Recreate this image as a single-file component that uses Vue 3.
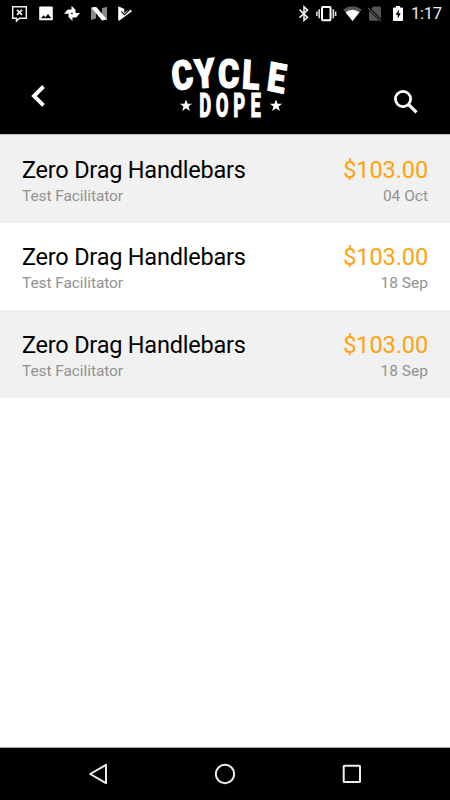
<script setup>
import { ref } from 'vue'

const time = ref('1:17')

const orders = ref([
  { id: 1, title: 'Zero Drag Handlebars', seller: 'Test Facilitator', price: '$103.00', date: '04 Oct' },
  { id: 2, title: 'Zero Drag Handlebars', seller: 'Test Facilitator', price: '$103.00', date: '18 Sep' },
  { id: 3, title: 'Zero Drag Handlebars', seller: 'Test Facilitator', price: '$103.00', date: '18 Sep' }
])
</script>

<template>
  <div class="screen">
    <div class="status-bar">
      <div class="status-left">
        <svg width="18" height="18" viewBox="0 0 18 18">
          <path d="M1.700 1.700h13.600v11.500H8.500L5.500 16v-2.800H1.700z" fill="none" stroke="#eee" stroke-width="1.500" />
          <path d="M6 4.900l5 5M11 4.900l-5 5" stroke="#eee" stroke-width="1.800" />
        </svg>
        <svg width="18" height="18" viewBox="0 0 18 18">
          <path d="M2.200 1.500h11.600q1 0 1 1v11.800q0 1-1 1H2.200q-1 0-1-1V2.500q0-1 1-1zM2.900 13.300h10.400l-3.300-4.300-2.600 3.200-1.700-2z" fill="#fff" fill-rule="evenodd" />
        </svg>
        <svg width="18" height="18" viewBox="0 0 18 18">
          <g fill="#fff">
            <path d="M7.500 8V.7L11.500 4.700V8z" />
            <path d="M8 8h8l-3.700 4.500H8z" />
            <path d="M8.500 8.500V16L4.500 12V8.500z" />
            <path d="M8.500 8.700H0l3.700-4.200h4.800z" />
          </g>
          <circle cx="8" cy="8.400" r=".8" fill="#000" />
        </svg>
        <svg width="18" height="18" viewBox="0 0 18 18">
          <path d="M0 3l5-1v11.500l-5 1.500zM11 3l5-1v12l-5 1.500z" fill="#888" />
          <path d="M.2 2.500l5-.5L16 14.500l-5 1z" fill="#fff" />
        </svg>
        <svg width="18" height="18" viewBox="0 0 18 18">
          <path d="M1.200 1.300L7.400 4l-.4 3.800L13 4l2 2.300L2.500 15.600q-1.300.5-1.300-.8z" fill="#fff" />
          <path d="M4.300 6.300l3 3.300L13.500 4" fill="none" stroke="#000" stroke-width="1.100" />
        </svg>
      </div>
      <div class="status-right">
        <svg class="bluetooth" width="12" height="18" viewBox="0 0 12 18">
          <path d="M1.500 4.700l8 7.600L6 15.500V1.900l3.500 3.200-8 7.600" fill="none" stroke="#eee" stroke-width="1.600" />
        </svg>
        <svg class="vibrate" width="22" height="18" viewBox="0 0 22 18">
          <rect x="6" y="2" width="8.500" height="13.200" rx=".8" fill="none" stroke="#fff" stroke-width="2" />
          <path d="M3.200 4.200v9M17.300 4.200v9M.9 6.500v4.500M19.600 6.500v4.500" stroke="#ddd" stroke-width="1.600" />
        </svg>
        <svg class="wifi" width="20" height="18" viewBox="0 0 20 18">
          <path d="M.2 4.500Q9.500-2 18.800 4.500L9.500 16z" fill="#555" />
          <path d="M2.500 7.300Q9.500 2.300 16.500 7.300L9.500 16z" fill="#fff" />
        </svg>
        <svg class="sim" width="16" height="18" viewBox="0 0 16 18">
          <path d="M6.300 1.500H13q1 0 1 1v11.200L4.300 4zM2 5.700L12.300 15.700H3q-1 0-1-1z" fill="#555" />
          <path d="M1 2.900l13.300 13.300" stroke="#555" stroke-width="1.200" />
        </svg>
        <svg class="battery" width="12" height="18" viewBox="0 0 12 18">
          <path d="M4 1h4v1.500h2q1 0 1 1V15q0 1-1 1H2q-1 0-1-1V3.500q0-1 1-1h2z" fill="#fff" />
          <path d="M7 4.200L3.600 9.800H5.700v4L8.700 8.300H6.600z" fill="#000" />
        </svg>
        <span class="clock">{{ time }}</span>
      </div>
    </div>

    <header class="header">
      <button class="icon-btn back" aria-label="Back">
        <svg width="18" height="24" viewBox="0 0 18 24">
          <path d="M14.500 2.500L5 12l9.500 9.300" fill="none" stroke="#fff" stroke-width="3.900" />
        </svg>
      </button>
      <svg class="logo" width="140" height="75" viewBox="0 0 140 75">
        <text
          class="logo-top"
          transform="scale(0.8 1)"
          x="17 44 72.500 102 132.500"
          y="41.300 38.500 37.500 38.200 40"
          rotate="-9 -4 0 4 9"
        >CYCLE</text>
        <text class="logo-bottom" transform="scale(0.56 1)" x="70 99.500 131 161.500" y="67.500">DOPE</text>
        <g fill="#fff">
          <path d="M26 49.500l1.600 4.200h4.500l-3.600 2.800 1.400 4.500-3.900-2.700-3.900 2.700 1.400-4.500-3.600-2.800h4.500z" />
          <path d="M116 49.500l1.600 4.200h4.500l-3.600 2.800 1.400 4.500-3.900-2.700-3.900 2.700 1.400-4.500-3.600-2.800h4.500z" />
        </g>
      </svg>
      <button class="icon-btn search" aria-label="Search">
        <svg width="28" height="28" viewBox="0 0 28 28">
          <circle cx="11" cy="11" r="7.600" fill="none" stroke="#fff" stroke-width="2.800" />
          <path d="M16.500 16.500l8 7.800" stroke="#fff" stroke-width="3.200" />
        </svg>
      </button>
    </header>

    <main class="orders">
      <div v-for="order in orders" :key="order.id" class="order">
        <div class="order-info">
          <div class="title">{{ order.title }}</div>
          <div class="sub">{{ order.seller }}</div>
        </div>
        <div class="order-total">
          <div class="price">{{ order.price }}</div>
          <div class="sub">{{ order.date }}</div>
        </div>
      </div>
    </main>

    <nav class="nav-bar">
      <svg width="22" height="22" viewBox="0 0 22 22">
        <path d="M19 1.800v18.400L3.200 11z" fill="none" stroke="#eee" stroke-width="2" stroke-linejoin="round" />
      </svg>
      <svg width="22" height="22" viewBox="0 0 22 22">
        <circle cx="11" cy="11" r="9.200" fill="none" stroke="#eee" stroke-width="2" />
      </svg>
      <svg width="22" height="22" viewBox="0 0 22 22">
        <rect x="2.700" y="2.700" width="16.300" height="16.300" rx=".5" fill="none" stroke="#eee" stroke-width="2" />
      </svg>
    </nav>
  </div>
</template>

<style>
body { margin: 0; background: #fff; }
</style>

<style scoped>
.screen {
  width: 450px;
  height: 800px;
  display: flex;
  flex-direction: column;
  overflow: hidden;
  background: #fff;
  font-family: Roboto, "Liberation Sans", sans-serif;
}

svg { display: block; flex: none; }

.status-bar {
  height: 27px;
  display: flex;
  align-items: center;
  justify-content: space-between;
  padding: 0 9px 0 11px;
  box-sizing: border-box;
  background: #000;
}

.status-left { display: flex; gap: 8.500px; }
.status-right { display: flex; align-items: center; }

.vibrate { margin-left: 6px; }
.wifi { margin-left: 5px; }
.sim { margin-left: 4px; }
.battery { margin-left: 9px; }

.clock {
  width: 30px;
  margin-left: 7px;
  font-size: 16.500px;
  line-height: 27px;
  letter-spacing: -0.3px;
  text-align: right;
  color: #eee;
}

.header {
  height: 107px;
  display: flex;
  justify-content: space-between;
  align-items: flex-start;
  padding: 23px 30px 0 28.500px;
  box-sizing: border-box;
  background: #000;
}

.icon-btn {
  padding: 0;
  border: none;
  background: none;
  cursor: pointer;
}

.back { width: 31px; margin-top: 34px; }
.search { margin-top: 37.500px; }
.logo { margin: 0 auto 0 100.500px; }

.logo-top {
  font-size: 40.500px;
  font-weight: 900;
  fill: #fff;
  stroke: #fff;
  stroke-width: 1.200;
}

.logo-bottom {
  font-size: 33px;
  font-weight: 900;
  fill: #fff;
  stroke: #fff;
  stroke-width: .8;
}

.orders {
  flex: 1;
  border-top: 1px solid #c0c0c0;
}

.order {
  height: 87.500px;
  display: flex;
  justify-content: space-between;
  padding: 19.700px 22px 0;
  box-sizing: border-box;
}

.order:nth-child(odd) { background: #f1f1f1; }

.order-total { text-align: right; }

.title,
.price {
  font-size: 23.500px;
  line-height: 30px;
  color: #000;
}

.title { letter-spacing: -0.22px; }

.price {
  letter-spacing: -0.1px;
  color: #ffa30f;
}

.sub {
  margin-top: 1px;
  font-size: 15.500px;
  line-height: 20px;
  letter-spacing: -0.08px;
  color: #929292;
}

.order-total .sub { letter-spacing: 0; }

.nav-bar {
  height: 53px;
  display: flex;
  justify-content: space-between;
  align-items: center;
  padding: 0 87px;
  box-sizing: border-box;
  border-top: 1px solid #aaa;
  background: #000;
}
</style>
